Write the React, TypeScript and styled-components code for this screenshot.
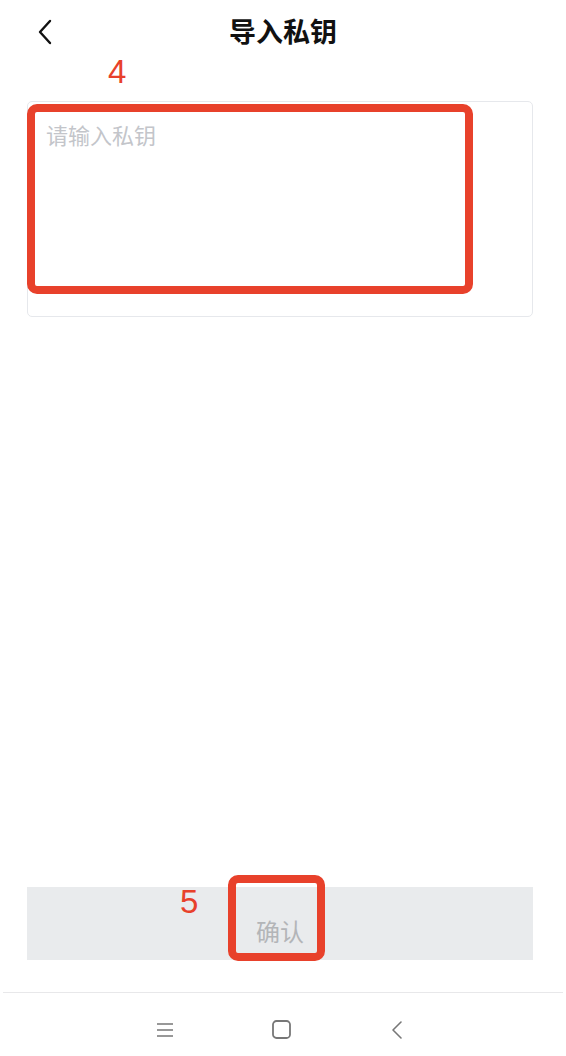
import styled, { createGlobalStyle } from "styled-components";

const GlobalStyle = createGlobalStyle`
  html, body {
    margin: 0;
    padding: 0;
    background: #fff;
  }
  body {
    font-family: "Noto Sans CJK SC", "Noto Sans", sans-serif;
  }
`;

const Page = styled.div`
  position: relative;
  width: 566px;
  height: 1056px;
  display: flex;
  flex-direction: column;
  background: #fff;
  overflow: hidden;
`;

const Header = styled.div`
  position: relative;
  height: 66px;
  display: flex;
  align-items: center;
  justify-content: center;
`;

const BackButton = styled.button`
  position: absolute;
  left: 30px;
  top: 15px;
  width: 30px;
  height: 34px;
  border: none;
  background: none;
  padding: 0;
  display: flex;
  align-items: center;
  justify-content: center;
`;

const Title = styled.h1`
  margin: -5px 0 0 0;
  font-size: 27px;
  font-weight: 700;
  color: #111;
`;

const Content = styled.div`
  flex: 1;
  display: flex;
  flex-direction: column;
  padding: 35px 33px 0 27px;
`;

const KeyInput = styled.textarea`
  box-sizing: border-box;
  height: 216px;
  width: 100%;
  border: 1px solid #e6e8ec;
  border-radius: 5px;
  padding: 17px 18px;
  resize: none;
  font-family: "Noto Sans CJK SC", sans-serif;
  font-size: 22px;
  line-height: 30px;
  color: #333;
  outline: none;
  &::placeholder {
    color: #c3c5ca;
  }
`;

const Footer = styled.div`
  padding: 0 33px 32px 27px;
`;

const ConfirmButton = styled.button`
  width: 100%;
  height: 73px;
  border: none;
  background: #e9ebed;
  color: #b3b5b8;
  font-family: "Noto Sans CJK SC", sans-serif;
  font-size: 24px;
  padding: 14px 0 0 0;
  display: flex;
  align-items: center;
  justify-content: center;
`;

const NavBar = styled.div`
  height: 63px;
  border-top: 1px solid #e8e8ea;
  margin: 0 3px;
  display: flex;
  align-items: center;
  justify-content: center;
  gap: 96px;
  padding-right: 4px;
`;

const NavIcon = styled.div`
  width: 20px;
  height: 20px;
  display: flex;
  align-items: center;
  justify-content: center;
  margin-top: 10px;
`;

const Marker = styled.div<{ $left: number; $top: number; $w: number; $h: number }>`
  position: absolute;
  left: ${(p) => p.$left}px;
  top: ${(p) => p.$top}px;
  width: ${(p) => p.$w}px;
  height: ${(p) => p.$h}px;
  box-sizing: border-box;
  border: 8px solid #e8412b;
  border-radius: 10px;
  pointer-events: none;
`;

const StepNumber = styled.div<{ $left: number; $top: number }>`
  position: absolute;
  left: ${(p) => p.$left}px;
  top: ${(p) => p.$top}px;
  font-family: "Liberation Sans", Arial, sans-serif;
  font-size: 33px;
  line-height: 1;
  color: #e8412b;
`;

export default function App() {
  return (
    <Page>
      <GlobalStyle />
      <Header>
        <BackButton aria-label="返回">
          <svg width="16" height="26" viewBox="0 0 16 26" fill="none">
            <path d="M13 2 L3 13 L13 24" stroke="#111" strokeWidth="2.4" strokeLinecap="round" strokeLinejoin="round" />
          </svg>
        </BackButton>
        <Title>导入私钥</Title>
      </Header>
      <Content>
        <KeyInput placeholder="请输入私钥" />
      </Content>
      <Footer>
        <ConfirmButton>确认</ConfirmButton>
      </Footer>
      <NavBar>
        <NavIcon>
          <svg width="18" height="16" viewBox="0 0 18 16">
            <path d="M1 2 H17 M1 8 H17 M1 14 H17" stroke="#777" strokeWidth="1.6" />
          </svg>
        </NavIcon>
        <NavIcon>
          <svg width="19" height="19" viewBox="0 0 19 19" fill="none">
            <rect x="1" y="1" width="17" height="17" rx="3.5" stroke="#777" strokeWidth="1.8" />
          </svg>
        </NavIcon>
        <NavIcon>
          <svg width="12" height="20" viewBox="0 0 12 20" fill="none">
            <path d="M10 2 L2 10 L10 18" stroke="#777" strokeWidth="1.6" strokeLinecap="round" strokeLinejoin="round" />
          </svg>
        </NavIcon>
      </NavBar>

      <StepNumber $left={108} $top={55}>4</StepNumber>
      <Marker $left={27} $top={104} $w={446} $h={190} />
      <StepNumber $left={180} $top={885}>5</StepNumber>
      <Marker $left={228} $top={875} $w={97} $h={86} />
    </Page>
  );
}
